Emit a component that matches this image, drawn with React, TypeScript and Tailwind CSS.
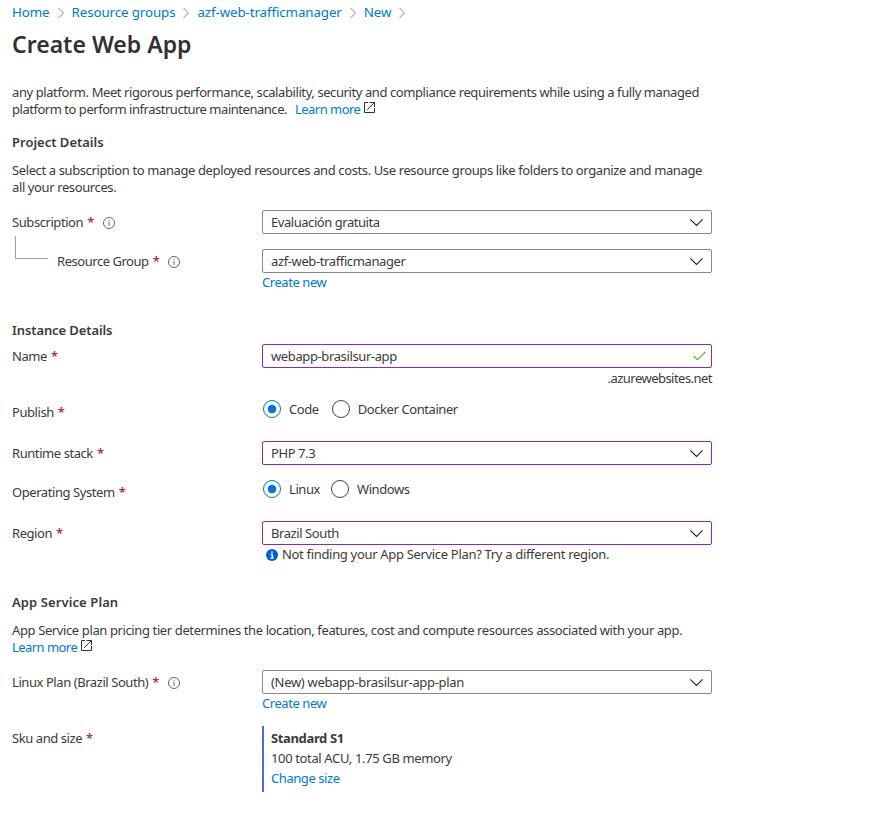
import React from "react";

const Chevron = () => (
  <svg className="mx-[6px] h-[12px] w-[10px] shrink-0" viewBox="0 0 10 12" fill="none" stroke="#8a8886" strokeWidth="1"><path d="M2.5 1l5 5-5 5" /></svg>
);
const Info = () => (
  <svg className="ml-[9px] mt-[1px] h-[12px] w-[12px] shrink-0" viewBox="0 0 12 12" fill="none" stroke="#666" strokeWidth="1"><circle cx="6" cy="6" r="5.5" /><path d="M6 5v4M6 3v1.1" /></svg>
);
const External = () => (
  <svg className="ml-[4px] inline-block h-[11px] w-[11px] align-[1px]" viewBox="0 0 11 11" fill="none" stroke="#323130" strokeWidth="1"><path d="M4 .5H.5v10h10V6M5.5 .5h5V5M10.3 .7L3.2 7.8" /></svg>
);
const Star = () => <span className="ml-[4px] font-semibold text-[#b02e36]">*</span>;

function Label({ text, info, top = "" }: { text: string; info?: boolean; top?: string }) {
  return <div className={`flex w-[250px] shrink-0 items-center tracking-[-0.43px] ${top}`}><span>{text}</span><Star />{info && <Info />}</div>;
}
function Select({ value, touched, check, spacing = "tracking-[-0.42px]" }: { value: string; touched?: boolean; check?: boolean; spacing?: string }) {
  return (
    <div className={`flex h-[24px] w-[450px] items-center justify-between rounded-[2px] border pl-[8px] ${check ? "pr-[5px]" : "pr-[7px]"} ${touched ? "border-[#8a2da5]" : "border-[#8a8886]"}`}>
      <span className={spacing}>{value}</span>
      {check ? (
        <svg className="h-[12px] w-[13px]" viewBox="0 0 13 12" fill="none" stroke="#6bb02a" strokeWidth="1.2"><path d="M.7 6l3.6 3.7L12.3 2" /></svg>
      ) : (
        <svg className="h-[10px] w-[15px]" viewBox="0 0 15 10" fill="none" stroke="#222" strokeWidth="1.1"><path d="M1.3 2.3l6.2 6.2 6.2-6.2" /></svg>
      )}
    </div>
  );
}
function Radio({ text, on }: { text: string; on?: boolean }) {
  return (
    <div className="flex h-[20px] items-center tracking-[-0.42px]">
      <svg className="mr-[7px] h-[20px] w-[20px]" viewBox="0 0 20 20"><circle cx="10" cy="10" r="8.5" fill="white" stroke={on ? "#0078d4" : "#444"} />{on && <circle cx="10" cy="10" r="4.3" fill="#0078d4" />}</svg>
      {text}
    </div>
  );
}

export default function App() {
  return (
    <main className="h-[822px] w-[891px] overflow-hidden bg-white pl-[12px] font-['Noto_Sans',sans-serif] text-[13px] leading-[17px] text-[#3b3a39]">
      <nav className="flex h-[25px] items-center text-[13.33px] tracking-[-0.1px] text-[#0078d4]">
        <a>Home</a><Chevron /><a>Resource groups</a><Chevron /><a>azf-web-trafficmanager</a><Chevron /><a>New</a><Chevron />
      </nav>
      <h1 className="h-[59px] pt-[3px] text-[23px] font-semibold leading-[32px] text-[#323130]">Create Web App</h1>
      <p className="whitespace-nowrap tracking-[-0.411px]">any platform. Meet rigorous performance, scalability, security and compliance requirements while using a fully managed<br /><span className="tracking-[-0.47px]">platform to perform infrastructure maintenance. <a className="ml-[5px] tracking-[-0.52px] text-[#0078d4]">Learn more</a><External /></span></p>
      <h2 className="mt-[16px] font-semibold">Project Details</h2>
      <p className="mt-[11px] whitespace-nowrap tracking-[-0.385px]">Select a subscription to manage deployed resources and costs. Use resource groups like folders to organize and manage<br />all your resources.</p>
      <div className="mt-[14px] flex h-[39px] items-start"><Label text="Subscription" info top="mt-[4px]" /><Select value="Evaluación gratuita" spacing="tracking-[-0.45px]" /></div>
      <div className="flex h-[73px] items-start">
        <div className="ml-[3px] mt-[-13px] h-[23px] w-[33px] border-b border-l border-[#a19f9d]" />
        <div className="ml-[9px] mt-[4px] flex w-[205px] items-center tracking-[-0.46px]">Resource Group<Star /><Info /></div>
        <div><Select value="azf-web-trafficmanager" spacing="tracking-[-0.38px]" /><a className="mt-px block tracking-[-0.43px] text-[#0078d4]">Create new</a></div>
      </div>
      <h2 className="h-[22px] font-semibold tracking-[-0.1px]">Instance Details</h2>
      <div className="flex h-[55px] items-start"><Label text="Name" top="mt-[4px]" /><div><Select value="webapp-brasilsur-app" touched check spacing="tracking-[-0.38px]" /><div className="mt-[2px] text-right tracking-[-0.53px]">.azurewebsites.net</div></div></div>
      <div className="flex h-[42px] items-start"><Label text="Publish" top="mt-[5px]" /><div className="flex gap-[12px]"><Radio text="Code" on /><Radio text="Docker Container" /></div></div>
      <div className="flex h-[38px] items-start"><Label text="Runtime stack" top="mt-[4px]" /><Select value="PHP 7.3" touched /></div>
      <div className="flex h-[42px] items-start"><Label text="Operating System" top="mt-[5px]" /><div className="flex gap-[10px]"><Radio text="Linux" on /><Radio text="Windows" /></div></div>
      <div className="flex h-[73px] items-start"><Label text="Region" top="mt-[4px]" /><div><Select value="Brazil South" touched /><div className="ml-[4px] mt-px flex items-center tracking-[-0.32px]"><svg className="mr-[4px] h-[12px] w-[12px]" viewBox="0 0 12 12"><circle cx="6" cy="6" r="6" fill="#015cda" /><path d="M4.5 5.5H6.3V9M6 2.2v1.8M4.5 9h3.2" stroke="white" strokeWidth="1.3" fill="none" /></svg>Not finding your App Service Plan? Try a different region.</div></div></div>
      <h2 className="h-[28px] font-semibold tracking-[0.1px]">App Service Plan</h2>
      <p className="h-[48px] tracking-[-0.385px]">App Service plan pricing tier determines the location, features, cost and compute resources associated with your app.<br /><a className="tracking-[-0.55px] text-[#0078d4]">Learn more</a><External /></p>
      <div className="flex h-[56px] items-start"><Label text="Linux Plan (Brazil South)" info top="mt-[4px]" /><div><Select value="(New) webapp-brasilsur-app-plan" spacing="tracking-[-0.31px]" /><a className="mt-px block tracking-[-0.43px] text-[#0078d4]">Create new</a></div></div>
      <div className="flex items-start"><Label text="Sku and size" top="mt-[4px]" /><div className="h-[66px] border-l-2 border-[#4f6bcf] pl-[7px] pt-[2px] leading-[20px] tracking-[-0.36px]"><div className="font-bold">Standard S1</div><div>100 total ACU, 1.75 GB memory</div><a className="tracking-[-0.43px] text-[#0078d4]">Change size</a></div></div>
    </main>
  );
}
